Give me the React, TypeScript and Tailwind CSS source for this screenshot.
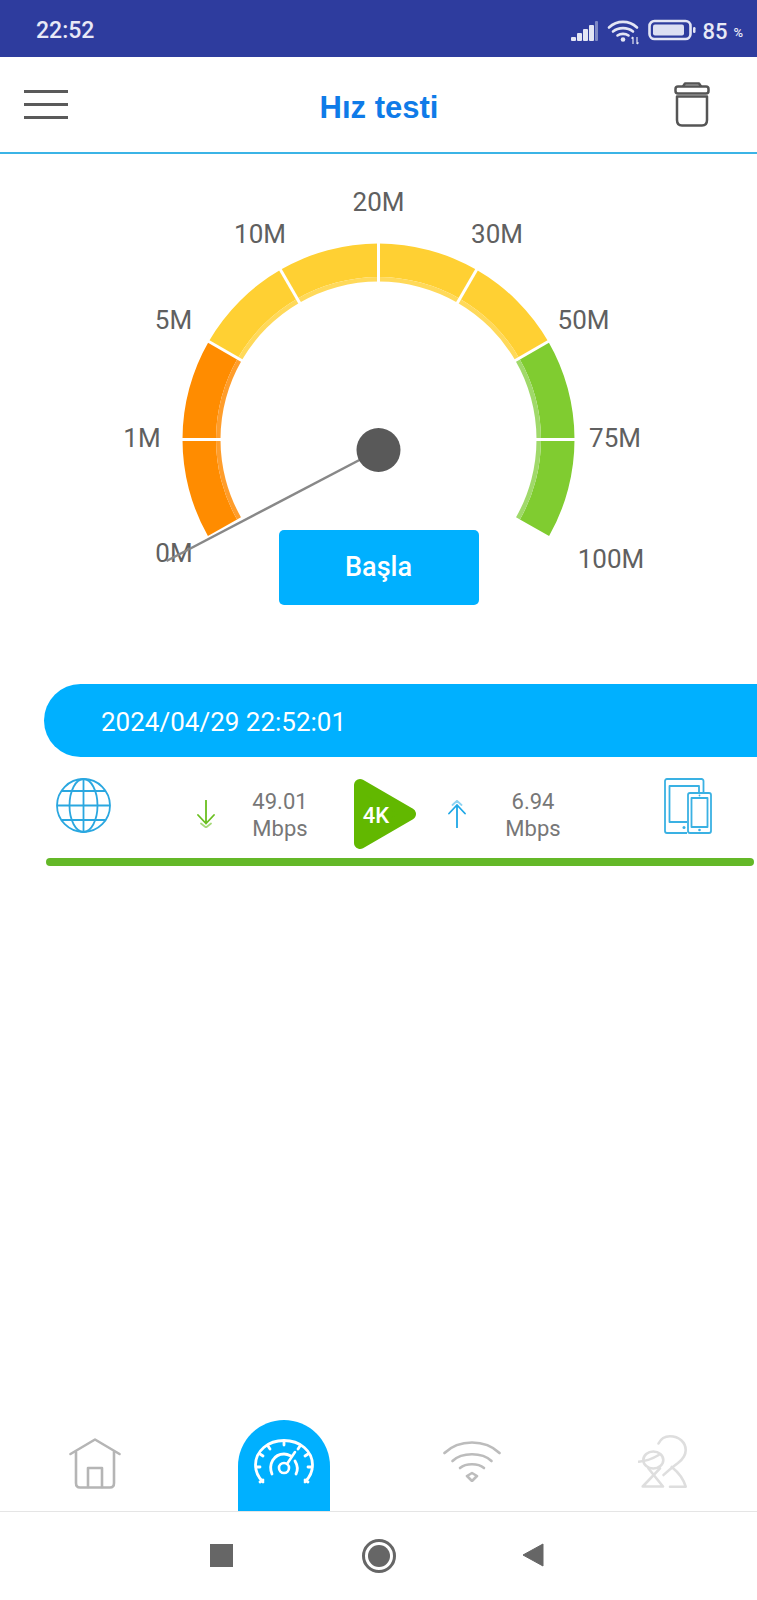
import React from 'react';

const CX = 378.5;
const CY = 285.5;
const ROUTER = 196;
const RMID = 162.5;
const RINNER = 158;

const point = (r: number, deg: number) => {
  const a = (deg * Math.PI) / 180;
  return [CX + r * Math.cos(a), CY - r * Math.sin(a)];
};

// annular sector from angle a to b (degrees, going clockwise on screen)
const sector = (r1: number, r2: number, a: number, b: number) => {
  const [x1, y1] = point(r1, a);
  const [x2, y2] = point(r1, b);
  const [x3, y3] = point(r2, b);
  const [x4, y4] = point(r2, a);
  return `M${x1} ${y1}A${r1} ${r1} 0 0 1 ${x2} ${y2}L${x3} ${y3}A${r2} ${r2} 0 0 0 ${x4} ${y4}Z`;
};

const segments = [
  { from: 209.5, to: 150, main: '#ff8c00', light: '#ff9d2b' },
  { from: 150, to: 30, main: '#ffd033', light: '#ffd95a' },
  { from: 30, to: -29.5, main: '#80cc30', light: '#a0d96a' },
];

const ticks = [180, 150, 120, 90, 60, 30, 0];

const labels = [
  { text: '0M', x: 174, y: 399 },
  { text: '1M', x: 142, y: 284 },
  { text: '5M', x: 173.5, y: 166 },
  { text: '10M', x: 260, y: 80 },
  { text: '20M', x: 378.5, y: 48 },
  { text: '30M', x: 497, y: 80 },
  { text: '50M', x: 583.5, y: 166 },
  { text: '75M', x: 615, y: 284 },
  { text: '100M', x: 611, y: 405 },
];

const Gauge = () => (
  <svg viewBox="0 0 757 454" className="block w-[757px] h-[454px]">
    {segments.map((s) => (
      <g key={s.from}>
        <path d={sector(ROUTER, RMID, s.from, s.to)} fill={s.main} />
        <path d={sector(RMID, RINNER, s.from, s.to)} fill={s.light} />
      </g>
    ))}
    {ticks.map((t) => {
      const [x1, y1] = point(RINNER - 1, t);
      const [x2, y2] = point(ROUTER + 1, t);
      return <line key={t} x1={x1} y1={y1} x2={x2} y2={y2} stroke="#fff" strokeWidth="3" />;
    })}
    {labels.map((l) => (
      <text
        key={l.text}
        x={l.x}
        y={l.y}
        textAnchor="middle"
        dominantBaseline="central"
        fill="#606060"
        className="text-[26px]"
      >
        {l.text}
      </text>
    ))}
    <line x1="166.5" y1="407" x2="378.5" y2="296" stroke="#888" strokeWidth="2.5" />
    <circle cx="378.5" cy="296" r="22" fill="#595959" />
  </svg>
);

const StatusIcons = () => (
  <svg width="126" height="26" viewBox="0 0 126 26" fill="none">
    {/* signal */}
    <rect x="0" y="18" width="5" height="4" rx="1" fill="#e3e5f4" />
    <rect x="6" y="14" width="5" height="8" rx="1" fill="#e3e5f4" />
    <rect x="12" y="10" width="5" height="12" rx="1" fill="#e3e5f4" />
    <rect x="18" y="6" width="5" height="16" rx="1" fill="#e3e5f4" />
    <rect x="24" y="2" width="3" height="20" rx="1" fill="#7f89c4" />
    {/* wifi */}
    <g stroke="#e3e5f4" strokeWidth="2.6" strokeLinecap="round">
      <path d="M38 8.500C46 1 58 1 66 8.500" />
      <path d="M42 12.500C47.500 8 56.500 8 62 12.500" />
      <path d="M46.500 16.500C49.500 14.300 54.500 14.300 57.500 16.500" />
    </g>
    <circle cx="52" cy="20.500" r="2.300" fill="#e3e5f4" />
    <path d="M62 18v7M60.500 19.500L62 18M66 18v7M67.500 23.500L66 25" stroke="#e3e5f4" strokeWidth="1.200" />
    {/* battery */}
    <rect x="78.500" y="2" width="41" height="18" rx="5" stroke="#e3e5f4" strokeWidth="2.600" />
    <rect x="82" y="5.500" width="31" height="11" rx="2" fill="#dcdff2" />
    <rect x="122" y="8" width="2.500" height="6" rx="1.200" fill="#e3e5f4" />
  </svg>
);

const MenuIcon = () => (
  <div className="flex flex-col gap-[10px] w-[44px]">
    <div className="h-[3px] bg-[#5a5a5a]" />
    <div className="h-[3px] bg-[#5a5a5a]" />
    <div className="h-[3px] bg-[#5a5a5a]" />
  </div>
);

const TrashIcon = () => (
  <svg width="36" height="45" viewBox="0 0 36 45" fill="none" stroke="#555" strokeWidth="2.500" strokeLinejoin="round">
    <path d="M9 4.500L11 1.500H25L27 4.500" />
    <rect x="1.500" y="4.500" width="33" height="7" rx="2.500" />
    <path d="M3 14.500H33V38C33 41.500 31 43.500 28 43.500H8C5 43.500 3 41.500 3 38Z" />
  </svg>
);

const GlobeIcon = () => (
  <svg width="55" height="55" viewBox="0 0 55 55" fill="none" stroke="#2aa7e0" strokeWidth="1.800">
    <circle cx="27.500" cy="27.500" r="26.500" />
    <ellipse cx="27.500" cy="27.500" rx="14" ry="26.500" />
    <path d="M27.500 1V54M1 27.500H54M5.500 13H49.500M5.500 42H49.500" />
  </svg>
);

const DownArrow = () => (
  <svg width="18" height="28" viewBox="0 0 18 28" fill="none" stroke="#6abf1f" strokeWidth="1.800" strokeLinecap="round">
    <path d="M9 0.500V23.500M1 15L9 23.500L17 15" />
    <path d="M4 23.500L9 27.500L14 23.500" strokeOpacity="0.6" />
  </svg>
);

const UpArrow = () => (
  <svg width="18" height="28" viewBox="0 0 18 28" fill="none" stroke="#1ea7e6" strokeWidth="1.800" strokeLinecap="round">
    <path d="M9 27.500V5M1 13.500L9 5L17 13.500" />
    <path d="M4.500 5L9 0.800L13.500 5" strokeOpacity="0.5" />
  </svg>
);

const QualityBadge = () => (
  <svg width="64" height="72" viewBox="0 0 64 72">
    <path d="M7 7L57 36L7 65Z" fill="#62b800" stroke="#62b800" strokeWidth="12" strokeLinejoin="round" />
    <text x="23" y="37" textAnchor="middle" dominantBaseline="central" fill="#fff" className="text-[22px] font-medium">
      4K
    </text>
  </svg>
);

const DevicesIcon = () => (
  <svg width="48" height="56" viewBox="0 0 48 56" fill="none" stroke="#3ab1e3" strokeWidth="1.800" strokeLinejoin="round">
    <path d="M39.500 14V3C39.500 1.800 38.700 1 37.500 1H3C1.800 1 1 1.800 1 3V53C1 54.200 1.800 55 3 55H23" />
    <path d="M35 14V8H5.500V44H23" />
    <circle cx="20" cy="49.500" r="1.500" fill="#3ab1e3" stroke="none" />
    <rect x="24" y="15" width="23" height="40" rx="2" />
    <rect x="27.500" y="20" width="16" height="29" />
    <circle cx="35.500" cy="52" r="1.300" fill="#3ab1e3" stroke="none" />
    <circle cx="35.500" cy="17.500" r="0.900" fill="#3ab1e3" stroke="none" />
  </svg>
);

const Stat = ({ value }: { value: string }) => (
  <div className="w-[60px] flex flex-col items-center text-[22px] leading-[27px] text-[#777] whitespace-nowrap">
    <span>{value}</span>
    <span>Mbps</span>
  </div>
);

const HomeIcon = () => (
  <svg width="52" height="51" viewBox="0 0 52 51" fill="none" stroke="#b5b5b5" strokeWidth="2.600" strokeLinecap="round" strokeLinejoin="round">
    <path d="M1.500 16L26 1.500L50.500 16" />
    <path d="M7 14V45C7 48 8.500 49.500 11 49.500H41C43.500 49.500 45 48 45 45V14" />
    <path d="M19 49V30H33V49" />
  </svg>
);

const SpeedIcon = () => (
  <svg width="60" height="46" viewBox="0 0 60 46" fill="none" stroke="#fff" strokeWidth="2.800" strokeLinecap="round">
    <path d="M9 43C4 38 1.500 32 1.500 26C1.500 12 14 1.500 30 1.500C46 1.500 58.500 12 58.500 26C58.500 32 56 38 51 43" />
    <path d="M30 2V6M14 7L16 10M46 7L44 10M2 28H6M58 28H54M6 43L9 41M54 43L51 41M6 15L9 17M54 15L51 17" />
    <path d="M18 35C14 25 20 15 30 15C33 15 35 16 37 17M41 22C44 27 44 31 42 35" />
    <circle cx="30" cy="29" r="5" strokeWidth="2.600" />
    <path d="M33 25L41 13" strokeWidth="2.600" />
  </svg>
);

const WifiIcon = () => (
  <svg width="58" height="42" viewBox="0 0 58 42" fill="none" stroke="#bcbcbc" strokeWidth="2.600" strokeLinecap="round" strokeLinejoin="round">
    <path d="M1.500 13C16 -1 42 -1 56.500 13" />
    <path d="M9.500 21C19 12 39 12 48.500 21" />
    <path d="M17 28C23 23 35 23 41 28" />
    <path d="M24 36L29 33L34 36L29 41Z" />
  </svg>
);

const PeopleIcon = () => (
  <svg width="50" height="54" viewBox="0 0 50 54" fill="none" stroke="#dedede" strokeWidth="2.600" strokeLinecap="round" strokeLinejoin="round">
    <path d="M20.500 8.500C23 3.500 27 1.300 32 1.300C41 1.300 47.700 7.500 47.700 15C47.700 21 44 25 40 28C35 31.500 30 36 25.500 40" />
    <path d="M33.700 32C40 37 45.500 44 47.700 51.700H32" />
    <ellipse cx="15.300" cy="25" rx="10" ry="8.500" />
    <path d="M0.800 26.700C8 26 15 23.500 20.700 20" />
    <path d="M10.300 33.300L25 51.500H4.700L22 33.300" />
  </svg>
);

const App = () => {
  return (
    <div className="w-[757px] min-h-[1600px] flex flex-col bg-white font-['Roboto',sans-serif]">
      {/* status bar */}
      <div className="h-[57px] bg-[#2e3c9e] flex items-center pl-[36px] pr-[14px] text-[#e8e9f6]">
        <span className="text-[23px] font-medium mt-[6px]">22:52</span>
        <div className="ml-auto flex items-center">
          <div className="mt-[6px]">
            <StatusIcons />
          </div>
          <span className="ml-[5px] text-[22px] font-medium mt-[6px]">85</span>
          <span className="ml-[6px] text-[13px] font-medium mt-[9px]">%</span>
        </div>
      </div>

      {/* header */}
      <div className="h-[97px] grid grid-cols-[1fr_auto_1fr] items-center pl-[24px] pr-[47px] border-b-2 border-[#3bb4e6]">
        <MenuIcon />
        <span className="ml-[24px] mt-[8px] text-[31px] font-bold text-[#0f7be8] font-['Liberation_Sans',sans-serif]">Hız testi</span>
        <div className="justify-self-end"><TrashIcon /></div>
      </div>

      {/* gauge */}
      <div className="flex flex-col items-center">
        <Gauge />
        <button className="relative -mt-[78px] w-[200px] h-[75px] rounded-[5px] bg-[#00b0ff] text-white text-[27px] font-medium">
          Başla
        </button>
      </div>

      {/* last result */}
      <div className="mt-[79px] ml-[44px]">
        <div className="h-[73px] rounded-l-[37px] bg-[#00b0ff] flex items-center pl-[57px] pt-[3px] text-white text-[26px]">
          2024/04/29 22:52:01
        </div>
        <div className="flex items-center h-[101px] pl-[12px]">
          <div className="mt-[-4px]"><GlobeIcon /></div>
          <div className="ml-[86px] mt-[13px]"><DownArrow /></div>
          <div className="ml-[35px] mt-[15px]"><Stat value="49.01" /></div>
          <div className="ml-[43px] mt-[13px]"><QualityBadge /></div>
          <div className="ml-[31px] mt-[13px]"><UpArrow /></div>
          <div className="ml-[37px] mt-[15px]"><Stat value="6.94" /></div>
          <div className="ml-[101px] mt-[-4px]"><DevicesIcon /></div>
        </div>
        <div className="h-[8px] ml-[2px] mr-[3px] rounded-[4px] bg-[#64b828]" />
      </div>

      {/* bottom tabs */}
      <div className="mt-auto h-[92px] grid grid-cols-[238px_92px_1fr] border-b border-[#e5e5e5]">
        <div className="flex justify-end pr-[117px] pt-[18px]"><HomeIcon /></div>
        <div className="rounded-t-[46px] bg-[#00b0ff] flex justify-center pt-[19px]"><SpeedIcon /></div>
        <div className="flex pl-[113px] pt-[20px]">
          <WifiIcon />
          <div className="ml-[137px] -mt-[5px]"><PeopleIcon /></div>
        </div>
      </div>

      {/* android nav */}
      <div className="h-[88px] flex items-center pl-[210px] pb-[2px]">
        <div className="w-[23px] h-[23px] bg-[#666]" />
        <div className="ml-[129px] mt-[1px] w-[34px] h-[34px] rounded-full border-[3px] border-[#666] flex items-center justify-center">
          <div className="w-[22px] h-[22px] rounded-full bg-[#666]" />
        </div>
        <svg className="ml-[126px]" width="22" height="24" viewBox="0 0 22 24">
          <path d="M21 1V23L1 12Z" fill="#666" stroke="#666" strokeLinejoin="round" />
        </svg>
      </div>
    </div>
  );
};

export default App;
